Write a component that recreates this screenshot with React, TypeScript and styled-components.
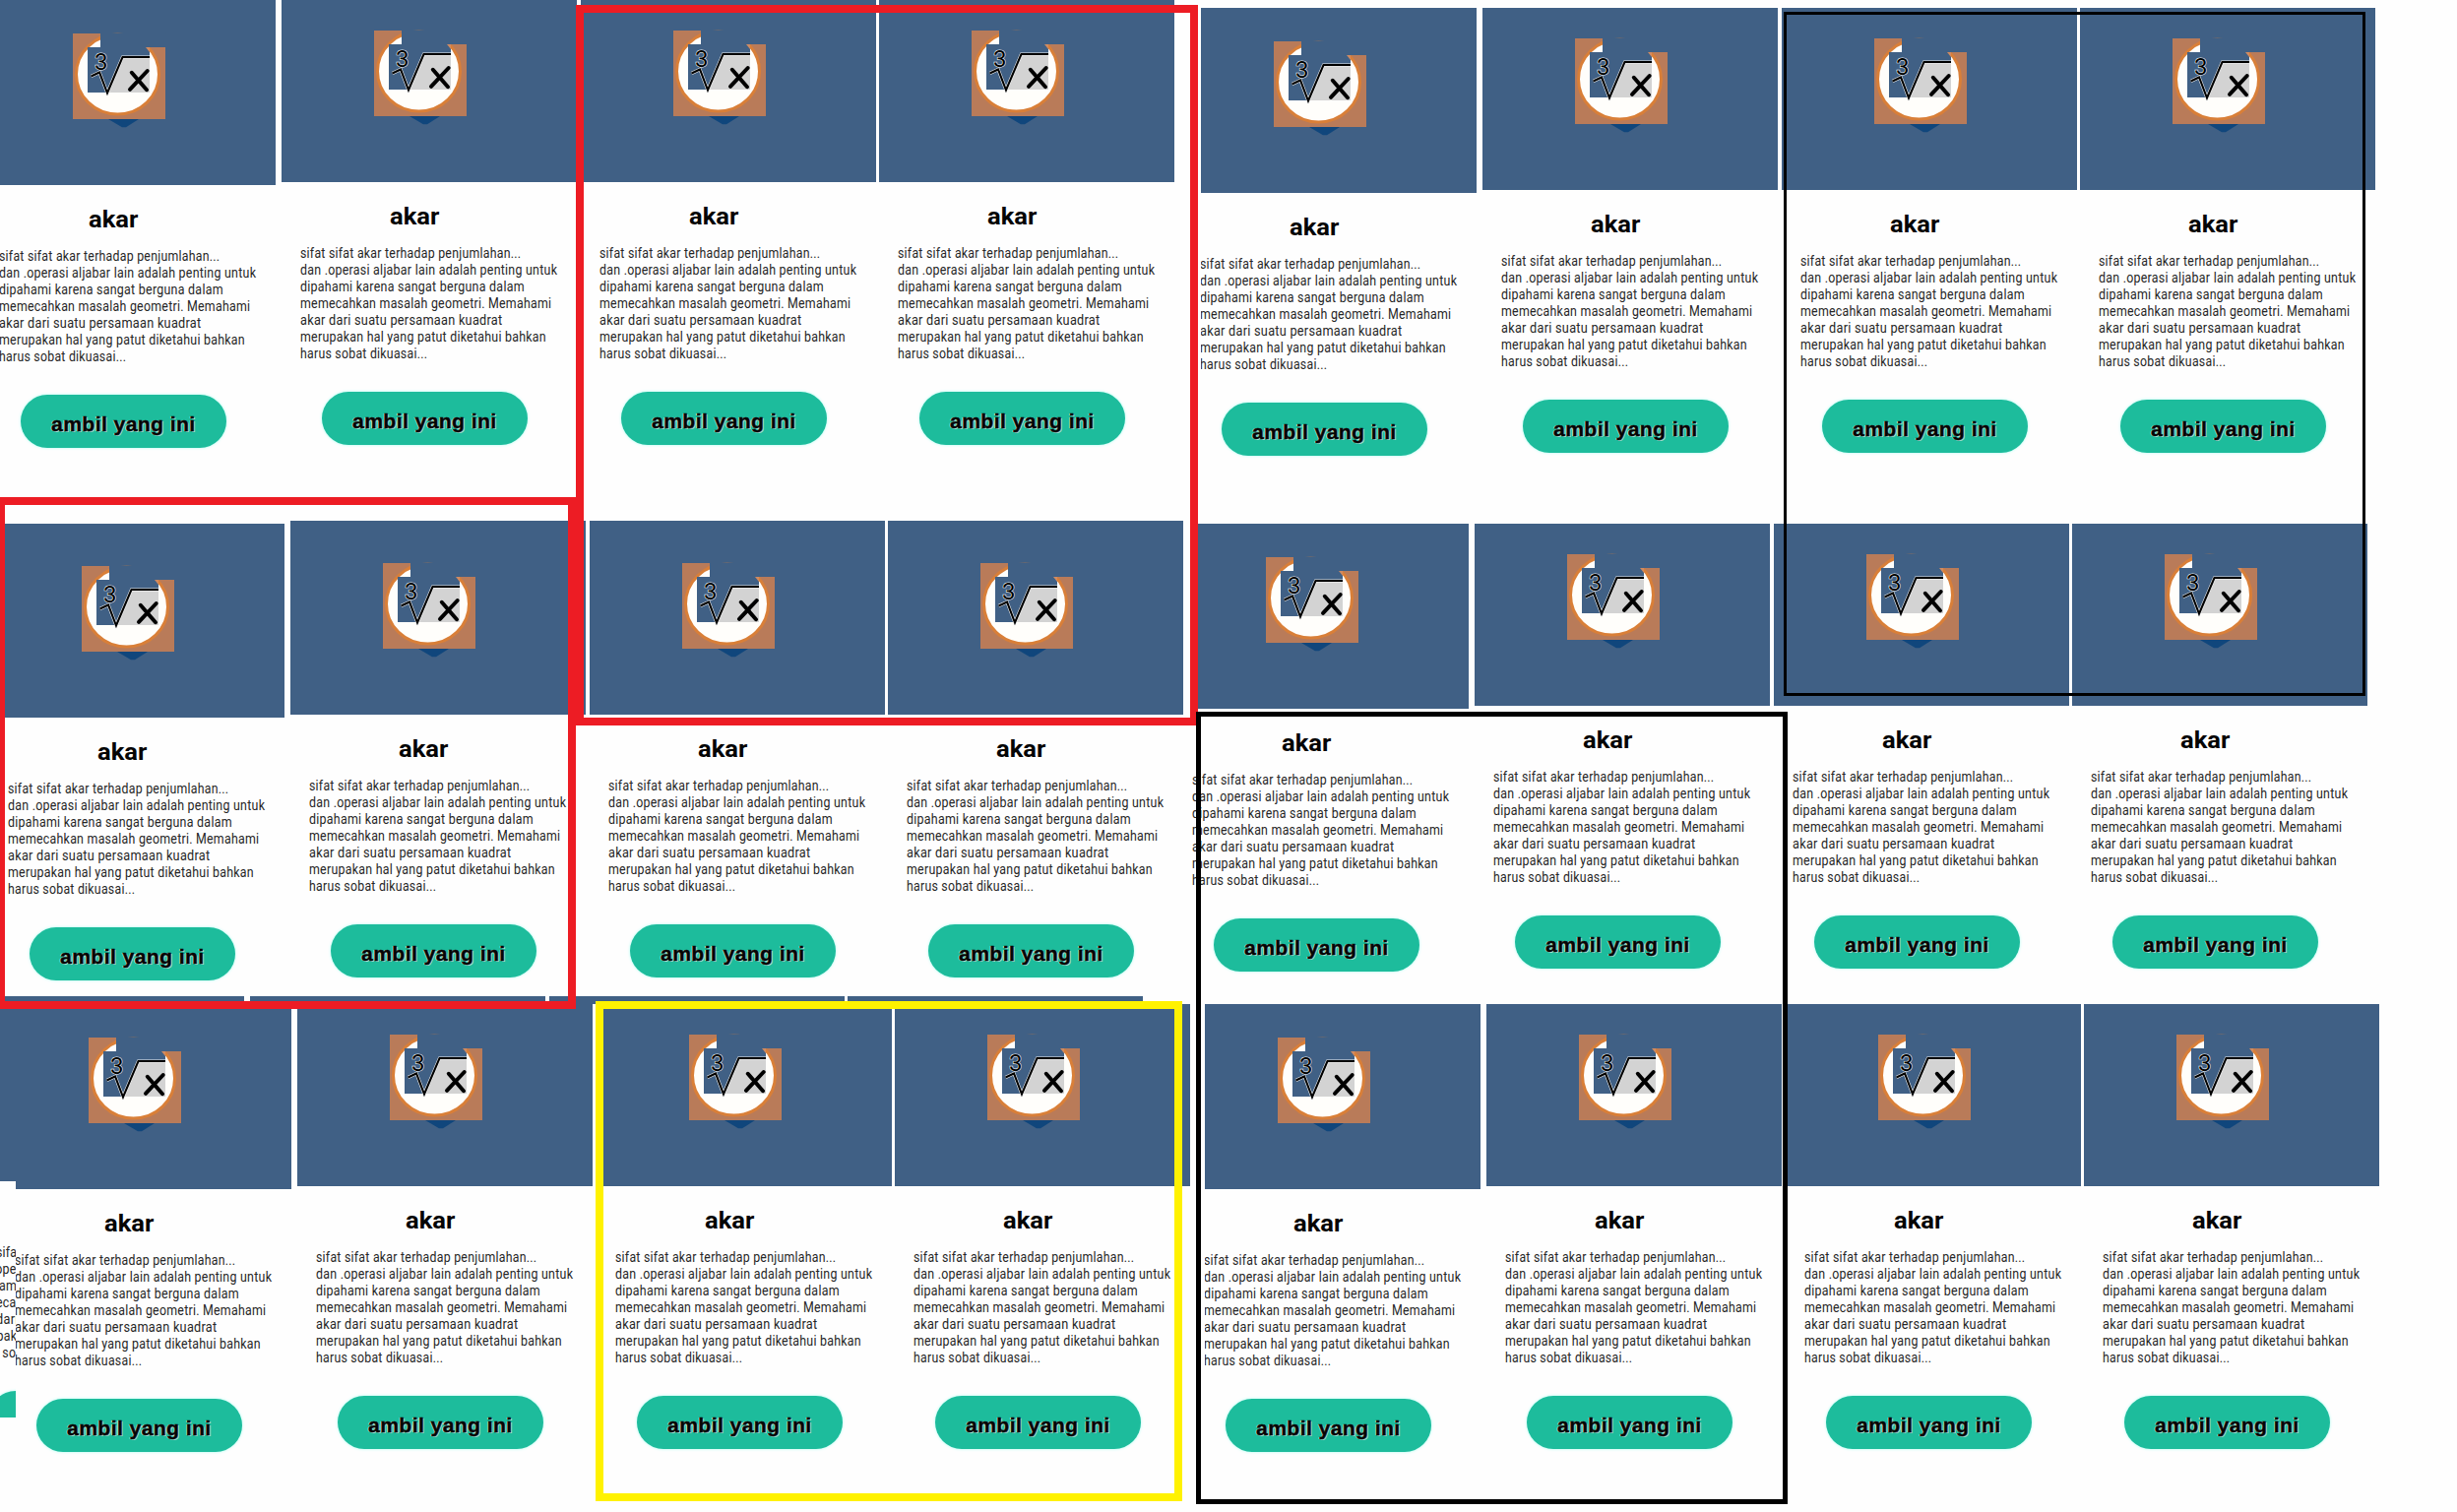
import React, { useLayoutEffect, useRef, useState } from 'react';
import styled, { createGlobalStyle } from 'styled-components';

const GlobalStyle = createGlobalStyle`
  body {
    margin: 0;
    background: #fefefe;
  }
`;

const Canvas = styled.main`
  position: relative;
  width: 2496px;
  height: 1536px;
  overflow: hidden;
  background: #fefefe;
`;

/* A sheet of four cards; sheets overlap each other on the canvas. */
const Sheet = styled.section<{ $x: number; $y: number; $w: number; $h: number }>`
  position: absolute;
  left: ${(p) => p.$x}px;
  top: ${(p) => p.$y}px;
  width: ${(p) => p.$w}px;
  height: ${(p) => p.$h}px;
  overflow: hidden;
  background: #fefefe;
`;

const CardRow = styled.div<{ $cropX: number; $cropY: number }>`
  display: flex;
  align-items: flex-start;
  width: 1240px;
  margin-left: ${(p) => -p.$cropX}px;
  margin-top: ${(p) => -p.$cropY}px;
`;

const CardBox = styled.article<{ $gap: number; $drop: number }>`
  flex: none;
  width: 300px;
  margin-right: ${(p) => p.$gap}px;
  margin-top: ${(p) => p.$drop}px;
`;

const Banner = styled.div`
  box-sizing: border-box;
  height: 197px;
  padding: 43px 0 0 94px;
  background: #406085;
`;

const LogoSvg = styled.svg`
  display: block;
  overflow: visible;
`;

const Title = styled.h2`
  margin: 22px 0 0 110px;
  font: 700 23.5px/26px Roboto, 'Liberation Sans', sans-serif;
  color: #050505;
`;

const Copy = styled.div`
  margin: 15.5px 0 0 19px;
  font: 400 14px/17px Roboto, 'Liberation Sans', sans-serif;
  letter-spacing: 0.3px;
  color: #262626;
`;

const Line = styled.span`
  display: block;
  width: max-content;
  white-space: nowrap;
  transform-origin: left center;
`;

const PickButton = styled.button`
  display: flex;
  align-items: center;
  box-sizing: border-box;
  width: 209px;
  height: 54px;
  margin: 30.5px 0 0 41px;
  padding: 6px 0 0 31px;
  border: 0;
  border-radius: 27px;
  background: #1dbc9c;
  box-shadow: 0 0 3px #a5fff0;
  color: #050505;
  font: 700 19.5px/48px 'Liberation Sans', Arial, sans-serif;
  letter-spacing: 0.4px;
  -webkit-text-stroke: 0.5px #050505;
  text-shadow: -1px 0 0 #d8f5ee, 1px 1px 0 #9fe0d2;
`;

const Frame = styled.div<{ $x: number; $y: number; $w: number; $h: number; $line: number; $color: string }>`
  position: absolute;
  box-sizing: border-box;
  left: ${(p) => p.$x}px;
  top: ${(p) => p.$y}px;
  width: ${(p) => p.$w}px;
  height: ${(p) => p.$h}px;
  border: ${(p) => p.$line}px solid ${(p) => p.$color};
  pointer-events: none;
`;

/* Condenses or widens a line of text to a set width. */
function FitLine({ width, children }: { width: number; children: string }) {
  const ref = useRef<HTMLSpanElement>(null);
  const [scale, setScale] = useState(1);
  useLayoutEffect(() => {
    if (ref.current) setScale(width / ref.current.offsetWidth);
  }, [width, children]);
  return (
    <Line ref={ref} style={{ transform: `scaleX(${scale})` }}>
      {children}
    </Line>
  );
}

function RootLogo() {
  return (
    <LogoSvg width="94" height="96" viewBox="0 0 94 96">
      <path d="M36 87H67L54 95.3H50Z" fill="#10467c" />
      <rect width="94" height="87" fill="#b97b59" />
      <ellipse cx="45.5" cy="41.5" rx="42" ry="40.5" fill="#fffefb" stroke="#d97f38" strokeWidth="3" />
      <path d="M28 -0.5H94.5V14H78V60H15V14H28Z" fill="#406085" />
      <path d="M74 14H78V19Z" fill="#d08b62" />
      <path d="M35 60L50.5 24H78V60Z" fill="#d3d3d3" />
      <path d="M18.5 43.5L27 39.5L35 60.5L50.5 24H78" fill="none" stroke="#f4f4f4" strokeWidth="3.2" />
      <path d="M18.5 43.5L27 39.5L35 60.5L50.5 24H78" fill="none" stroke="#000" strokeWidth="2.1" />
      <text
        x="22"
        y="36.5"
        fontFamily="Roboto, 'Liberation Sans', sans-serif"
        fontSize="24"
        fill="#000"
        stroke="#e8edf2"
        strokeWidth="1.2"
        paintOrder="stroke"
      >
        3
      </text>
      <path d="M59.8 39.8L75 57.2M75.7 38L58 56.8" stroke="#000" strokeWidth="4" strokeLinecap="round" />
    </LogoSvg>
  );
}

const COPY: [string, number][] = [
  ['sifat sifat akar terhadap penjumlahan...', 224],
  ['dan .operasi aljabar lain adalah penting untuk', 261],
  ['dipahami karena sangat berguna dalam', 228],
  ['memecahkan masalah geometri. Memahami', 255],
  ['akar dari suatu persamaan kuadrat', 205],
  ['merupakan hal yang patut diketahui bahkan', 250],
  ['harus sobat dikuasai...', 129],
];

function Card({ gap, drop, bannerOnly }: { gap: number; drop: number; bannerOnly?: boolean }) {
  return (
    <CardBox $gap={gap} $drop={drop}>
      <Banner>{!bannerOnly && <RootLogo />}</Banner>
      {!bannerOnly && (
        <>
          <Title>
            <FitLine width={50}>akar</FitLine>
          </Title>
          <Copy>
            {COPY.map(([text, width]) => (
              <FitLine key={text} width={width}>
                {text}
              </FitLine>
            ))}
          </Copy>
          <PickButton>
            <FitLine width={147}>ambil yang ini</FitLine>
          </PickButton>
        </>
      )}
    </CardBox>
  );
}

const CARDS = [
  { gap: 6, drop: 3 },
  { gap: 4, drop: 0 },
  { gap: 3, drop: 0 },
  { gap: 0, drop: 0 },
];

/* `covered` marks the sheet that lies under the one in front of it. */
const SHEETS = [
  { x: 0, y: 0, w: 1200, h: 505, cropX: 20, cropY: 12 },
  { x: 1220, y: 8, w: 1210, h: 505, cropX: 20, cropY: 12 },
  { x: 0, y: 529, w: 1209, h: 483, cropX: 11, cropY: 0 },
  { x: 1211, y: 532, w: 1210, h: 480, cropX: 19, cropY: 12 },
  { x: 0, y: 1012, w: 1200, h: 428, cropX: 52, cropY: 12, covered: true },
  { x: 16, y: 1020, w: 1204, h: 516, cropX: 20, cropY: 12 },
  { x: 1224, y: 1020, w: 1210, h: 516, cropX: 20, cropY: 12 },
];

const FRAMES = [
  { x: 585, y: 5, w: 632, h: 732, line: 8, color: '#ed1c24' },
  { x: -3, y: 505, w: 588, h: 520, line: 8, color: '#ed1c24' },
  { x: 605, y: 1017, w: 596, h: 508, line: 8, color: '#fff200' },
  { x: 1812, y: 12, w: 591, h: 695, line: 3, color: '#000' },
  { x: 1215, y: 723, w: 601, h: 805, line: 5, color: '#000' },
];

export default function App() {
  return (
    <Canvas>
      <GlobalStyle />
      {SHEETS.map((s, i) => (
        <Sheet key={i} $x={s.x} $y={s.y} $w={s.w} $h={s.h}>
          <CardRow $cropX={s.cropX} $cropY={s.cropY}>
            {CARDS.map((c, j) => (
              <Card key={j} gap={c.gap} drop={c.drop} bannerOnly={s.covered && j > 0} />
            ))}
          </CardRow>
        </Sheet>
      ))}
      {FRAMES.map((f, i) => (
        <Frame key={i} $x={f.x} $y={f.y} $w={f.w} $h={f.h} $line={f.line} $color={f.color} />
      ))}
    </Canvas>
  );
}
